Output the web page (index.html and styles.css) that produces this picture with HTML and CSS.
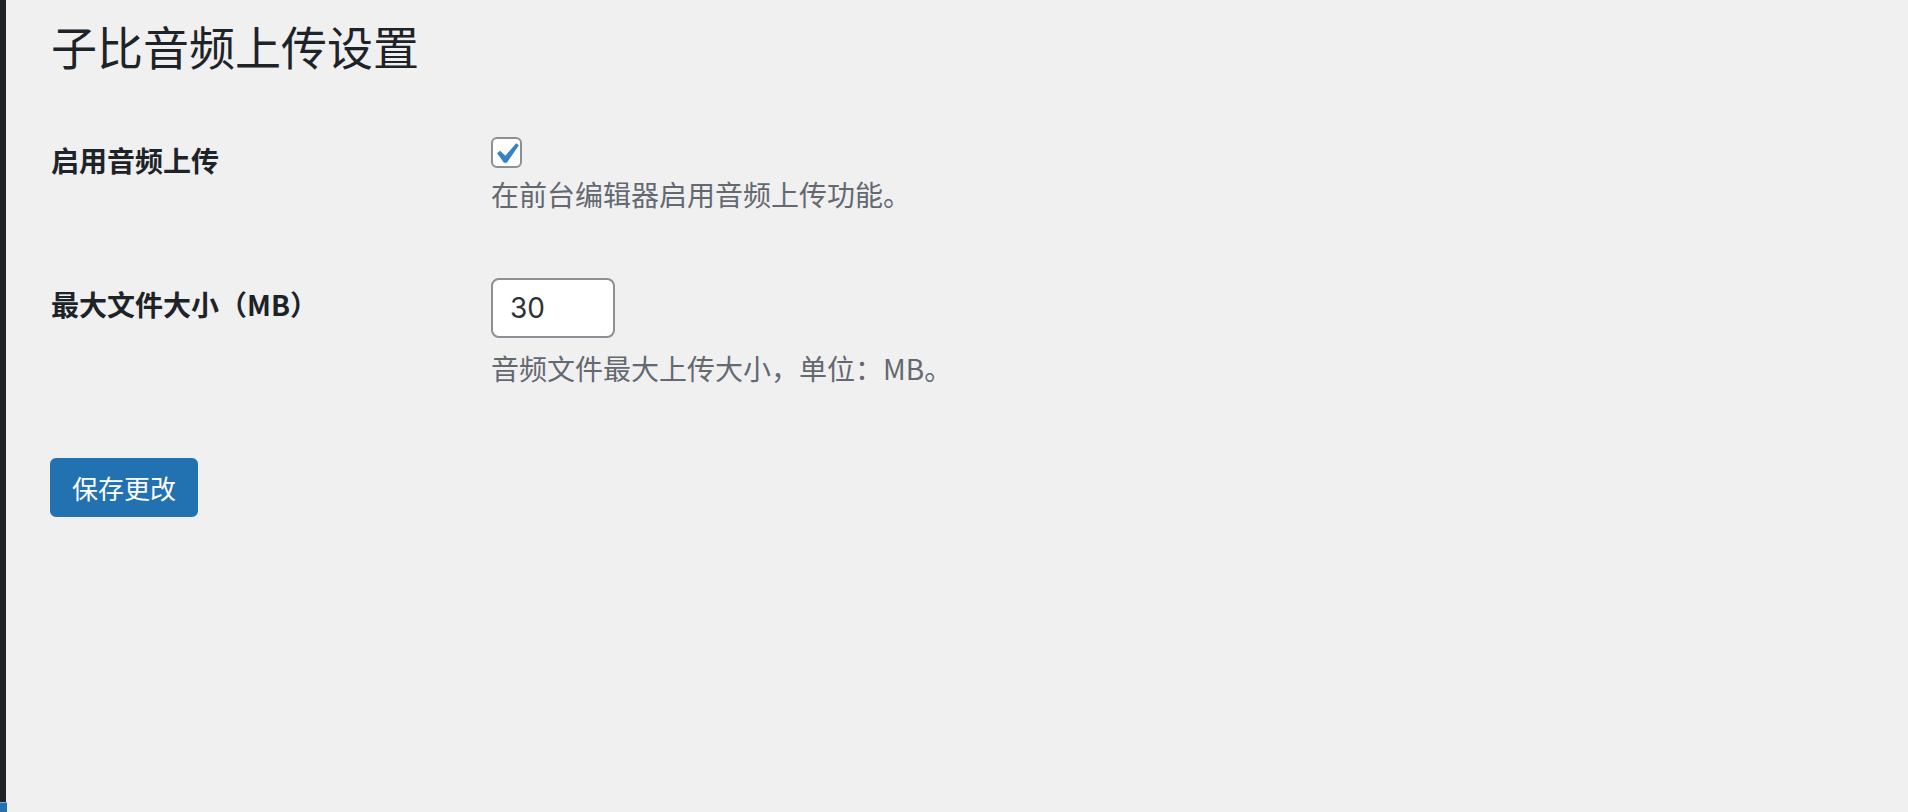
FILE: index.html
```html
<!DOCTYPE html>
<html lang="zh-CN">
<head>
<meta charset="utf-8">
<title>子比音频上传设置</title>
<link rel="stylesheet" href="styles.css">
</head>
<body>
<div class="layout">
  <aside class="adminbar">
    <div class="adminbar-fill"></div>
    <div class="adminbar-current"></div>
  </aside>
  <main class="wrap">
    <h1 class="page-title">子比音频上传设置</h1>
    <form class="settings-form">
      <div class="form-table">
        <div class="row row-first">
          <div class="row-label">启用音频上传</div>
          <div class="row-field">
            <label class="checkbox">
              <span class="checkbox-box">
                <svg class="checkbox-mark" viewBox="0 0 20 20" aria-hidden="true"><path d="M14.83 4.89l1.34.94-5.81 8.38H9.02L5.78 9.67l1.34-1.25 2.57 2.4z"/></svg>
              </span>
            </label>
            <p class="description desc-checkbox">在前台编辑器启用音频上传功能。</p>
          </div>
        </div>
        <div class="row row-second">
          <div class="row-label row-label-input">最大文件大小（MB）</div>
          <div class="row-field row-field-input">
            <div class="text-input">30</div>
            <p class="description desc-input">音频文件最大上传大小，单位：MB。</p>
          </div>
        </div>
      </div>
      <div class="submit">
        <span class="button-primary">保存更改</span>
      </div>
    </form>
  </main>
</div>
</body>
</html>
```
FILE: styles.css
```css
html, body {
  margin: 0;
  padding: 0;
  height: 100%;
}

body {
  background: #f0f0f1;
  color: #1d2327;
  font-family: "Noto Sans CJK SC", "Noto Sans", sans-serif;
  overflow: hidden;
}

.layout {
  display: flex;
  height: 812px;
}

.adminbar {
  width: 6px;
  flex: none;
  display: flex;
  flex-direction: column;
  background: #1d2327;
}

.adminbar-fill {
  flex: 1;
}

.adminbar-current {
  height: 9px;
  width: 7px;
  background: #2271b1;
  border-top: 1px solid #72aee6;
}

.wrap {
  flex: 1;
  padding-left: 45px;
}

.page-title {
  margin: 0;
  padding-top: 15px;
  font-size: 46px;
  font-weight: 400;
  line-height: 60px;
  color: #1d2327;
}

.settings-form {
  margin-top: 32px;
}

.form-table {
  display: flex;
  flex-direction: column;
}

.row {
  display: grid;
  grid-template-columns: 440px 1fr;
}

.row-label {
  font-size: 28px;
  font-weight: 700;
  line-height: 36px;
  padding-top: 35px;
  color: #1d2327;
}

.row-label-input {
  padding-top: 41px;
}

.row-field {
  padding: 30px 0;
}

.row-field-input {
  padding-top: 33px;
}

.checkbox {
  display: block;
  width: 31px;
  height: 31px;
}

.checkbox-box {
  position: relative;
  display: block;
  box-sizing: border-box;
  width: 31px;
  height: 31px;
  border: 2px solid #8c8f94;
  border-radius: 6px;
  background: #fff;
}

.checkbox-mark {
  position: absolute;
  left: -8px;
  top: -6px;
  width: 42px;
  height: 42px;
  fill: #3582c4;
}

.description {
  margin: 0;
  font-size: 28px;
  line-height: 42px;
  color: #646970;
}

.desc-checkbox {
  margin-top: 5px;
}

.desc-input {
  margin-top: 9px;
}

.text-input {
  box-sizing: border-box;
  width: 124px;
  height: 60px;
  border: 2px solid #8c8f94;
  border-radius: 8px;
  background: #fff;
  padding: 0 17px;
  font-family: "Inter", "Liberation Sans", sans-serif;
  font-size: 28px;
  line-height: 56px;
  color: #2c3338;
}

.submit {
  margin-top: 39px;
  margin-left: -1px;
}

.button-primary {
  display: inline-block;
  box-sizing: border-box;
  height: 59px;
  width: 148px;
  padding: 0;
  text-align: center;
  border: 2px solid #2271b1;
  border-radius: 6px;
  background: #2271b1;
  color: #fff;
  font-size: 26px;
  line-height: 55px;
  white-space: nowrap;
}
```
